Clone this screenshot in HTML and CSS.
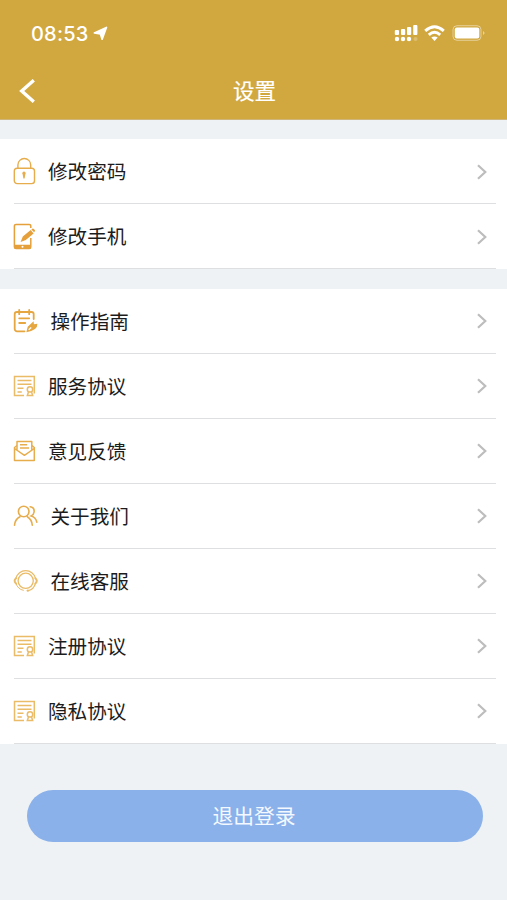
FILE: index.html
```html
<!DOCTYPE html>
<html lang="zh-CN">
<head>
<meta charset="utf-8">
<title>设置</title>
<link rel="stylesheet" href="styles.css">
</head>
<body>
<svg class="defs" aria-hidden="true">
  <symbol id="chevron" viewBox="0 0 12 18"><path d="M2 2.2 9.3 9 2 15.8" fill="none" stroke="#bdbdbd" stroke-width="2.2"/></symbol>
  <symbol id="cert" viewBox="0 0 28 30">
    <g fill="none" stroke="currentColor" stroke-width="1.5"><path d="M12 24.5H2.5v-19h19.8v17M5.5 9.5h14M5.5 13.3h14M5.5 17.2h6M5.5 21h4.3"/><circle cx="18" cy="18.4" r="2.7"/><path d="M16.5 21 15.3 24.5h5.4L19.5 21"/></g>
  </symbol>
</svg>
<header class="header">
  <div class="status">
    <span class="time">08:53</span>
    <svg class="locate" viewBox="0 0 15 15"><path d="M13.4 1.4 9.1 13.2 7.4 7.8 1.4 6.9Z" fill="#fff" stroke="#fff" stroke-width="1.7" stroke-linejoin="round"/></svg>
    <svg class="signals" viewBox="0 0 94 20">
      <g fill="#fff"><rect x="1.8" y="7" width="4.2" height="5" rx="1"/><rect x="8" y="6" width="4.2" height="6" rx="1"/><rect x="14" y="4" width="4.2" height="8" rx="1"/><rect x="20.2" y="2" width="4.2" height="10" rx="1"/><circle cx="4" cy="16" r="2.2"/><circle cx="10" cy="16" r="2.2"/><circle cx="16" cy="16" r="2.2"/><circle cx="22.5" cy="16" r="2" opacity=".25"/></g>
      <g fill="none" stroke="#fff" stroke-width="2.9"><path d="M32.2 7.8q9.3-8.2 18.6 0M35.8 11.8q5.7-5 11.4 0"/></g><path d="M38.3 14.5q3.2-2.2 6.4 0L41.5 18Z" fill="#fff"/>
      <rect x="60" y="2.7" width="28" height="14.6" rx="4" fill="none" stroke="#fff" stroke-opacity=".45"/><rect x="61.8" y="4.5" width="24.5" height="11" rx="2" fill="#fff"/><path d="M90.2 8q2.5 2 0 4Z" fill="#fff" opacity=".6"/>
    </svg>
  </div>
  <div class="nav">
    <svg class="back" viewBox="0 0 18 26"><path d="M15.8 2.2 3.7 13l12.1 10.8" fill="none" stroke="#fff" stroke-width="3.4"/></svg>
    <h1>设置</h1>
  </div>
</header>
<main>
  <section class="group">
    <div class="row"><svg class="icon" viewBox="0 0 28 30"><g fill="none" stroke="currentColor" stroke-width="1.4"><rect x="2.3" y="11.2" width="20.2" height="15.4" rx="2.8"/><path d="M5.9 11V7.9a6.4 6.4 0 0 1 12.8 0V11"/></g><path d="M10.7 17.4a1.7 1.7 0 1 1 2.6 0l-.7 4.2h-1.2Z" fill="currentColor"/></svg><span>修改密码</span><svg class="chevron"><use href="#chevron"/></svg></div>
    <div class="row phone"><svg class="icon" viewBox="0 0 28 30"><path d="M18.8 6V4a1.6 1.6 0 0 0-1.6-1.6H4A1.6 1.6 0 0 0 2.4 4v21A1.6 1.6 0 0 0 4 26.6h13.2a1.6 1.6 0 0 0 1.6-1.6v-9" fill="none" stroke="currentColor" stroke-width="1.5"/><path d="M2.4 22.8h16.4V25a1.6 1.6 0 0 1-1.6 1.6H4A1.6 1.6 0 0 1 2.4 25Z" fill="currentColor"/><circle cx="10.5" cy="24.8" r="1" fill="#fff"/><path d="m8.6 19.9 2.2-5.3 7.9-6.5 2.9 3.3-7.8 6.6ZM19.4 7.5l.9-.7q.8-.6 1.5.1l1 1.2q.6.8-.1 1.4l-.7.7Z" fill="currentColor"/></svg><span>修改手机</span><svg class="chevron"><use href="#chevron"/></svg></div>
  </section>
  <section class="group">
    <div class="row wide guide"><svg class="icon" viewBox="0 0 28 30"><g fill="none" stroke="currentColor" stroke-width="1.8" stroke-linecap="round"><path d="M12.5 25.3H5A2.3 2.3 0 0 1 2.7 23V8.2Q2.7 6 5 6h14.5q2.2 0 2.2 2.2V13M7.2 4v4.2M17.2 4v4.2M7.2 12.3h10M7.2 17h6"/></g><path d="m14.3 26.2 1.4-5.4 5.9-5.6.3 3 3.5-.4q.2 3.2-2.4 5.1-3.4 2.5-8.7 3.3Z" fill="currentColor"/><path d="m16.7 23.8 2.5-2.3" stroke="#fff" stroke-width="1.3"/></svg><span>操作指南</span><svg class="chevron"><use href="#chevron"/></svg></div>
    <div class="row pale"><svg class="icon"><use href="#cert"/></svg><span>服务协议</span><svg class="chevron"><use href="#chevron"/></svg></div>
    <div class="row"><svg class="icon" viewBox="0 0 28 30"><g fill="none" stroke="currentColor" stroke-width="1.5" stroke-linejoin="round"><path d="M5 9.5 2.5 11.5v13h19.8v-13l-2.5-2"/><path d="M5 14.5v-9h14.8v9M2.5 12.5l9.9 6.8 9.9-6.8M8 8.7h7.2M8 12h9"/></g></svg><span>意见反馈</span><svg class="chevron"><use href="#chevron"/></svg></div>
    <div class="row wide"><svg class="icon" viewBox="0 0 28 30"><g fill="none" stroke="currentColor" stroke-width="1.6" stroke-linecap="round"><circle cx="11.7" cy="10.5" r="5.3"/><path d="M2.5 24.3c.3-4.1 2.3-7 5.5-8.6M20.3 24.3c-.3-4.1-2.3-7-5-8.6M18.2 5.7c3 .5 4.2 2.8 3.9 5.3-.2 2-1.5 3.2-2.9 3.9 3.1.9 5 3 5.6 6.2"/></g></svg><span>关于我们</span><svg class="chevron"><use href="#chevron"/></svg></div>
    <div class="row wide pale"><svg class="icon" viewBox="0 0 28 30"><g fill="none" stroke="currentColor" stroke-width="1.3" stroke-linecap="round"><circle cx="13.7" cy="14.8" r="7.6"/><path d="M4 12.2a10 10 0 0 1 19.4 0M23.4 17.4c-1 4.1-3.8 6.5-7.2 7.3"/><path d="M4 12.2q-2.8 2.6 0 5.2M23.4 12.2q2.8 2.6 0 5.2" stroke-width="2"/></g><path d="M4 17.3a10 10 0 0 0 7.8 7.1" fill="none" stroke="currentColor"/><circle cx="15.8" cy="24.6" r="1.2" fill="currentColor"/></svg><span>在线客服</span><svg class="chevron"><use href="#chevron"/></svg></div>
    <div class="row pale"><svg class="icon"><use href="#cert"/></svg><span>注册协议</span><svg class="chevron"><use href="#chevron"/></svg></div>
    <div class="row pale"><svg class="icon"><use href="#cert"/></svg><span>隐私协议</span><svg class="chevron"><use href="#chevron"/></svg></div>
  </section>
  <button class="logout">退出登录</button>
</main>
</body>
</html>
```
FILE: styles.css
```css
* { box-sizing: border-box; }
body {
  margin: 0;
  min-height: 900px;
  background: #eef2f5;
  color: #1c1c1c;
  font-family: "Liberation Sans", "Noto Sans CJK SC", sans-serif;
}
.defs { display: none; }
.header {
  height: 120px;
  background: #d1a840;
  color: #fff;
  border-bottom: 1px solid #cfb57a;
}
.status {
  height: 66px;
  padding: 0 20px 0 31px;
  display: flex;
  align-items: center;
}
.time {
  font: 500 20px/24px Inter, sans-serif;
  width: 58px;
  padding-top: 1px;
  letter-spacing: 0.2px;
  white-space: nowrap;
}
.locate { width: 15px; height: 15px; margin-left: 4px; }
.signals { width: 94px; height: 20px; margin-left: auto; }
.nav {
  height: 50px;
  display: grid;
  grid-template-columns: 60px 1fr 60px;
  align-items: center;
}
.back { width: 18px; height: 26px; margin-left: 18px; }
h1 {
  margin: 0;
  padding: 2px 0 0 2px;
  text-align: center;
  font-size: 21.5px;
  line-height: 30px;
  font-weight: 400;
  -webkit-text-stroke: 0.2px #fff;
}
.group {
  margin-top: 19px;
  padding: 0 11px 0 14px;
  background: #fff;
}
.row {
  height: 65px;
  display: flex;
  align-items: center;
  border-bottom: 1px solid #dedfe1;
  font-size: 19.6px;
  line-height: 28px;
  color: #e7ad4c;
}
.group + .group { margin-top: 20px; }
.row span { padding-top: 2px; color: #1c1c1c; }
.icon { width: 28px; height: 30px; margin: 0 8px 0 -2px; flex: none; }
.wide .icon { margin-right: 10.5px; }
.phone { color: #e5a03b; }
.guide { color: #e6a741; }
.pale { color: #eabc68; }
.chevron { width: 12px; height: 18px; margin: 0 8px 0 auto; }
.group:first-child .row { padding-top: 1px; }
.group:first-child .row span { padding-top: 1px; }
.logout {
  display: block;
  width: 456px;
  height: 52px;
  margin: 45.5px 0 0 27px;
  padding: 2px 2px 0 0;
  border: 0;
  border-radius: 26px;
  background: #8ab1ea;
  color: #f4f8ff;
  font: 20.8px/50px "Liberation Sans", "Noto Sans CJK SC", sans-serif;
}
```
